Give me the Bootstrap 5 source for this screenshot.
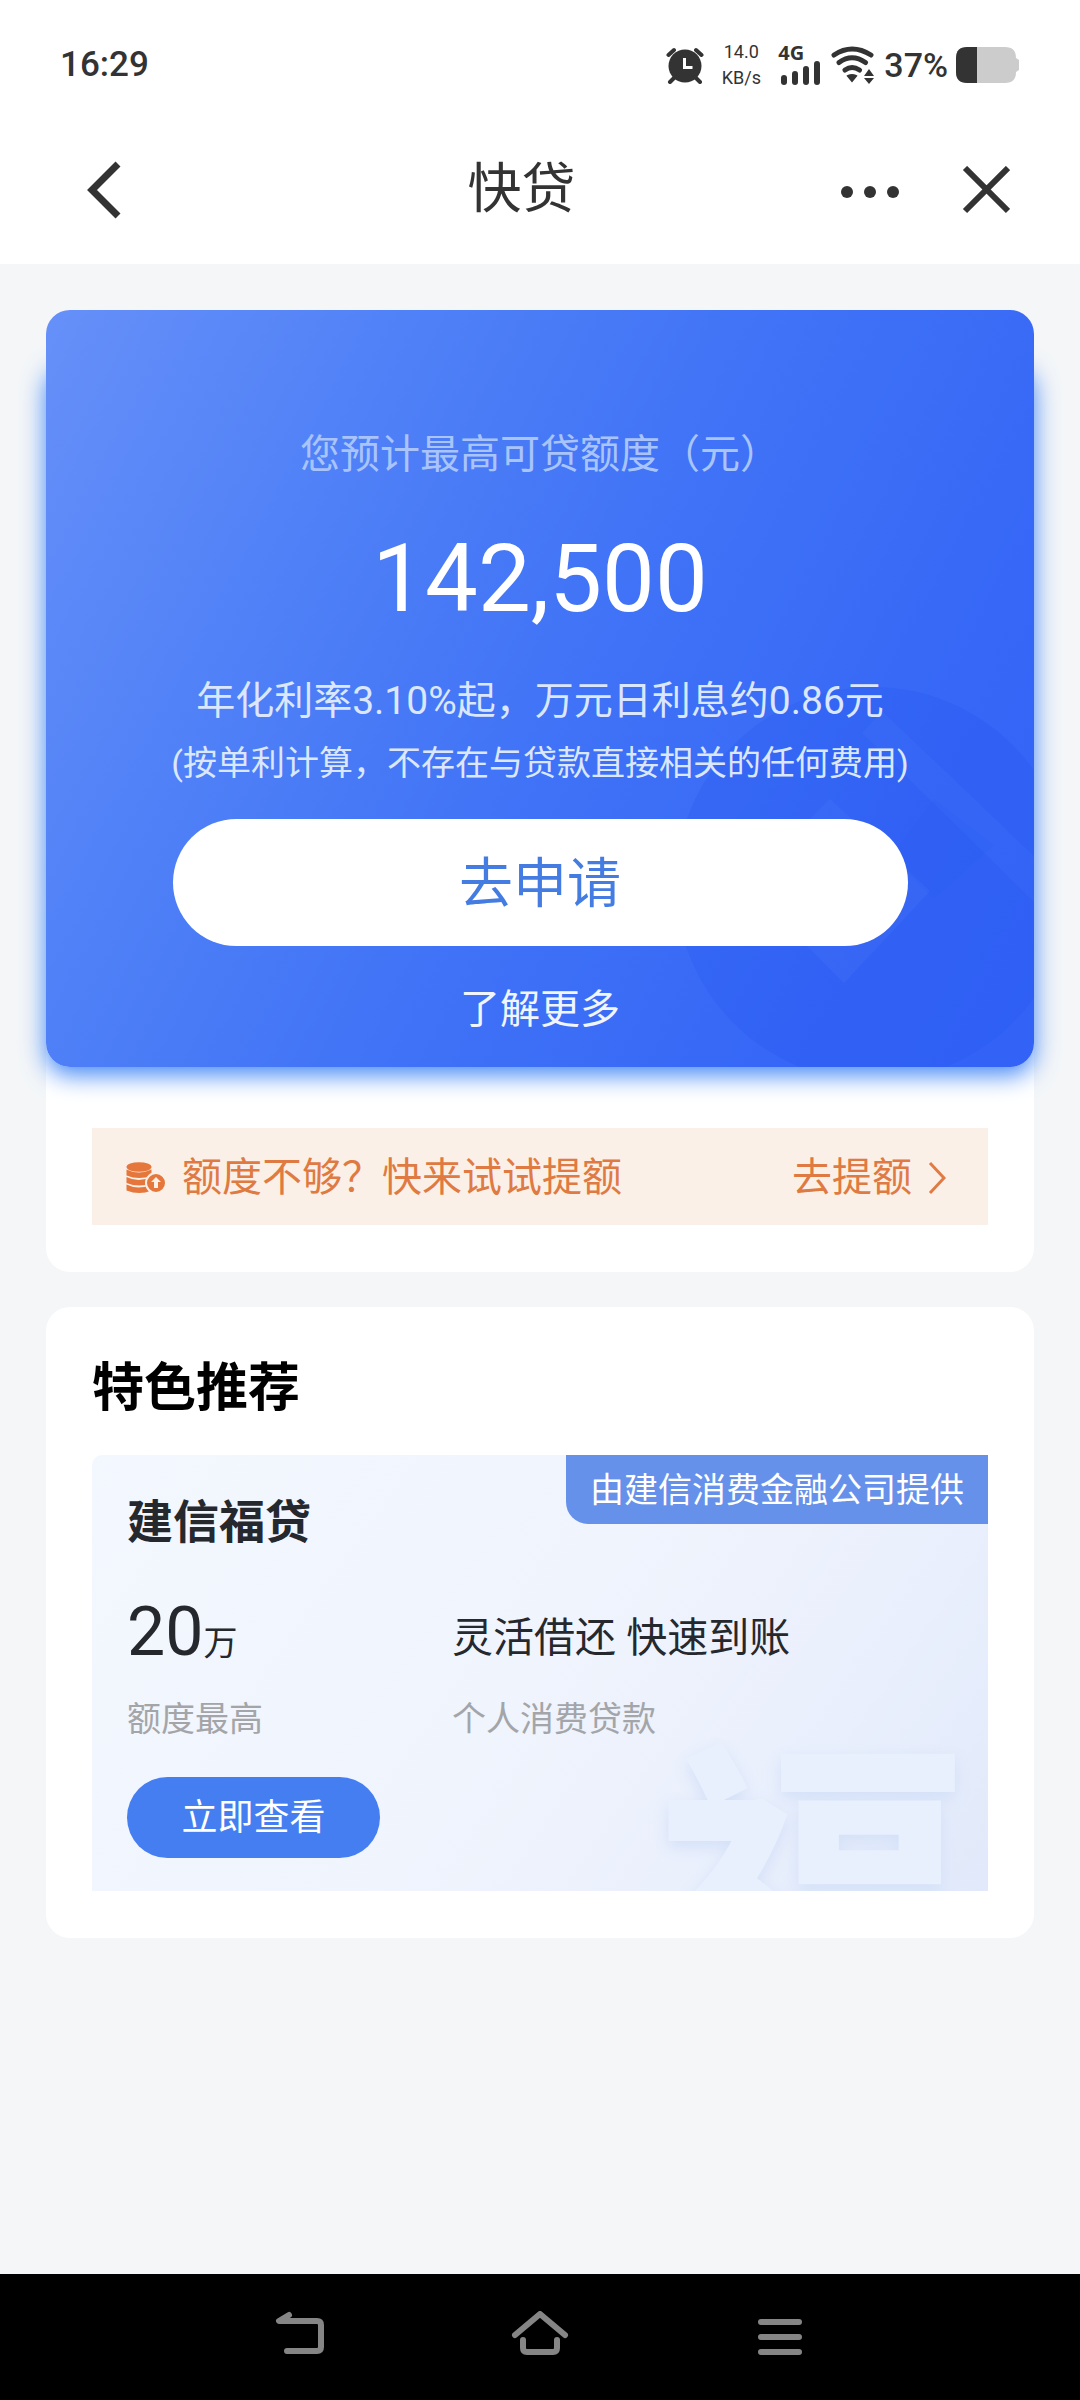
<!DOCTYPE html>
<html lang="zh-CN">
<head>
<meta charset="utf-8">
<meta name="viewport" content="width=device-width, initial-scale=1">
<title>快贷</title>
<link href="https://cdn.jsdelivr.net/npm/bootstrap@5.3.0/dist/css/bootstrap.min.css" rel="stylesheet">
<style>
  body { background: #f4f6f8; color: #25282d; font-family: Roboto, "Noto Sans CJK SC", sans-serif; font-size: 40px; line-height: 60px; }
  svg { display: block; flex-shrink: 0; }
  a { text-decoration: none; color: inherit; }
  .top-area { background: #fff; color: #333; }
  .status-row { height: 130px; padding: 0 60px; }
  .clock { font-size: 35px; font-weight: 500; }
  .net-speed { font-size: 18px; line-height: 26px; width: 38px; margin: 0 18px; }
  .net-type { font: 700 20px/16px "Open Sans", sans-serif; }
  .charge { font-size: 34px; font-weight: 500; }
  .title-row { height: 134px; padding: 0 70px 14px 84px; }
  .icon-btn { border: 0; background: none; padding: 0; color: inherit; }
  .back-btn { width: 119px; }
  .page-title { font-size: 54px; line-height: 60px; font-weight: 400; }
  .page-body { padding: 46px 46px 0; }
  .panel { background: #fff; border-radius: 24px; }
  .loan-card { position: relative; background: linear-gradient(118deg, #6690f9 0%, #4f80f7 28%, #4073f6 52%, #3667f6 80%, #3262f6 100%); border-radius: 24px; padding: 115px 0 27px; color: #dbe7ff; }
  .loan-glow { position: absolute; inset: 50px 0 0; border-radius: 24px; box-shadow: 0 8px 24px 0 #4287f5; }
  .loan-art { position: absolute; right: 0; bottom: 0; border-radius: 0 0 24px 0; }
  .loan-body { position: relative; }
  .quota-label { color: #a9c4fb; }
  .quota-sum { font-size: 94px; line-height: 96px; margin-top: 46px; color: #fff; }
  .rate-line { font-size: 39px; margin-top: 44px; }
  .rate-note { font-size: 34px; line-height: 48px; margin-top: 8px; }
  .apply-btn { width: 735px; max-width: 90%; height: 127px; margin-top: 32px; padding: 10px 0 6px; font-size: 54px; line-height: 60px; }
  .apply-btn, .apply-btn:hover { background: #fff; color: #447ce2; border: 0; }
  .more-link { margin-top: 34px; color: #f0f5ff; }
  .raise-wrap { padding: 61px 46px 47px; }
  .raise-bar { background: #fbf0e8; color: #df7a42; height: 97px; padding: 2px 42px 0 34px; }
  .feature-panel { margin-top: 35px; padding: 52px 46px 47px; }
  .feature-title { font-size: 52px; line-height: 60px; font-weight: 700; color: #000; margin-bottom: 36px; }
  .offer { position: relative; overflow: hidden; border-radius: 10px 0 0 0; padding: 37px 36px 33px 35px; background: linear-gradient(125deg, #f3f7fe 0%, #f0f4fd 50%, #e9effc 78%, #e1e9fa 100%); }
  .offer-body { position: relative; }
  .offer-tag { position: absolute; top: 0; right: 0; background: #6691ea; color: #fff; font-size: 34px; line-height: 68px; padding: 1px 24px 0 24px; border-radius: 0 0 0 22px; }
  .offer-art { position: absolute; right: 18px; top: 284px; font-size: 316px; line-height: 330px; font-weight: 900; color: #e8f0fd; text-shadow: 0 6px 16px #d3e0f8; user-select: none; }
  .offer-name { font-size: 46px; line-height: 60px; font-weight: 700; }
  .offer-grid { margin-top: 44px; }
  .offer-amount { width: 325px; }
  .big-num { font-size: 68px; line-height: 72px; }
  .unit { font-size: 34px; }
  .offer-main { height: 76px; }
  .slogan { font-size: 41px; padding-top: 8px; }
  .hint { font-size: 34px; line-height: 48px; color: #a3a5a8; margin-top: 23px; }
  .view-btn { width: 253px; height: 81px; font-size: 36px; margin-top: 34px; }
  .view-btn, .view-btn:hover { background: #457ef1; color: #fff; border: 0; }
  .sys-nav { background: #000; color: #858585; height: 126px; padding: 0 275px 6px; }
</style>
</head>
<body class="d-flex flex-column min-vh-100">

<header class="top-area">
  <div class="status-row d-flex align-items-center justify-content-between">
    <span class="clock">16:29</span>
    <div class="d-flex align-items-center">
      <svg width="38" height="38" viewBox="0 0 38 38" aria-label="闹钟">
        <circle cx="19" cy="20" r="16.500" fill="#333"/>
        <path d="M2.500 9 8 4M30 4l5.500 5M9 31l-5 5M29 31l5 5" stroke="#333" stroke-width="4" stroke-linecap="round"/>
        <path d="M18.500 12v9.500h8" stroke="#fff" stroke-width="3" fill="none"/>
      </svg>
      <div class="net-speed d-flex flex-column align-items-center"><span>14.0</span><span>KB/s</span></div>
      <div class="d-flex flex-column">
        <span class="net-type">4G</span>
        <svg width="44" height="24" viewBox="0 0 44 24" fill="#333" aria-label="信号">
          <rect x="3" y="14" width="6" height="10" rx="3"/><rect x="14" y="10" width="6" height="14" rx="3"/><rect x="25" y="5" width="6" height="19" rx="3"/><rect x="36" y="0" width="6" height="24" rx="3"/>
        </svg>
      </div>
      <svg class="ms-2" width="46" height="38" viewBox="0 0 46 38" fill="none" stroke="#333" stroke-width="5" stroke-linecap="round" aria-label="无线网络">
        <path d="M4 9Q22-3 41 9M9 16.500Q22 7 35.500 16.500M15 24Q22 19 29.500 24"/>
        <path d="M18 30q4-2 8 0l-4 5z" fill="#333" stroke-width="2"/>
        <path d="m34 30 5-7 5 7zM34 32h10l-5 6z" fill="#333" stroke="none"/>
      </svg>
      <span class="charge ms-2">37%</span>
      <svg class="ms-2" width="64" height="36" viewBox="0 0 64 36" aria-label="电池">
        <path d="M11 0h38q11 0 11 11l3 2v10l-3 2q0 11-11 11H11Q0 36 0 25V11Q0 0 11 0" fill="#ccc"/>
        <path d="M21 0H11Q0 0 0 11v14q0 11 11 11h10z" fill="#333"/>
      </svg>
    </div>
  </div>
  <nav class="title-row d-flex align-items-center" aria-label="页面">
    <button type="button" class="icon-btn back-btn" aria-label="返回">
      <svg width="44" height="60" viewBox="0 0 44 60"><path d="M34 4 8 30l26 26" fill="none" stroke="#333" stroke-width="7"/></svg>
    </button>
    <h1 class="page-title flex-grow-1 text-center mb-0">快贷</h1>
    <div class="d-flex align-items-center">
      <button type="button" class="icon-btn" aria-label="更多">
        <svg width="60" height="48" viewBox="0 0 60 48" fill="#333"><circle cx="7" cy="26" r="6"/><circle cx="30" cy="26" r="6"/><circle cx="53" cy="26" r="6"/></svg>
      </button>
      <button type="button" class="icon-btn" aria-label="关闭">
        <svg width="110" height="48" viewBox="0 0 110 48"><path d="m65 2 43 43M108 2 65 45" fill="none" stroke="#333" stroke-width="6"/></svg>
      </button>
    </div>
  </nav>
</header>

<main class="page-body">
  <section class="panel">
    <div class="position-relative">
      <div class="loan-glow"></div>
      <div class="loan-card text-center">
        <svg class="loan-art" width="380" height="400" viewBox="0 0 380 400" aria-hidden="true">
          <circle cx="219" cy="217" r="197" fill="#1d4cf0" opacity=".17"/>
          <path d="m228 44 152 145v46L208 66z" fill="#5f8bff" opacity=".11"/>
          <path d="m176 132 100 92-86 92-50-50 44-42-52-48z" fill="#5f8bff" opacity=".12"/>
          <path d="m280 132 60 46-60 54-44-42z" fill="#1d4cf0" opacity=".08"/>
        </svg>
        <div class="loan-body d-flex flex-column align-items-center">
          <div class="quota-label">您预计最高可贷额度（元）</div>
          <div class="quota-sum">142,500</div>
          <div class="rate-line">年化利率3.10%起，万元日利息约0.86元</div>
          <div class="rate-note">(按单利计算，不存在与贷款直接相关的任何费用)</div>
          <button type="button" class="btn rounded-pill apply-btn">去申请</button>
          <a href="#" class="more-link">了解更多</a>
        </div>
      </div>
    </div>
    <div class="raise-wrap">
      <a href="#" class="raise-bar d-flex align-items-center justify-content-between">
        <span class="d-flex align-items-center">
          <svg class="me-3" width="40" height="32" viewBox="0 0 40 32" aria-hidden="true">
            <g fill="#e5773c">
              <ellipse cx="13" cy="5" rx="12.500" ry="4.800"/>
              <path d="M.5 7.500q12 6 25 0v6q-12 5-25 0zM.5 15q12 6 25 0v6q-12 5-25 0zM.5 22.500q12 6 25 0v6q-12 5-25 0z"/>
            </g>
            <circle cx="30" cy="21" r="10" fill="#e5773c" stroke="#fbf0e8" stroke-width="2"/>
            <path d="m30 15-5 5h3v6h4v-6h3z" fill="#fbf0e8"/>
          </svg>
          额度不够？快来试试提额
        </span>
        <span class="d-flex align-items-center">
          去提额
          <svg class="ms-3" width="18" height="34" viewBox="0 0 18 34"><path d="m2 2 14 15L2 32" fill="none" stroke="#e07b43" stroke-width="3"/></svg>
        </span>
      </a>
    </div>
  </section>

  <section class="panel feature-panel">
    <h2 class="feature-title">特色推荐</h2>
    <article class="offer">
      <span class="offer-art" aria-hidden="true">福</span>
      <span class="offer-tag">由建信消费金融公司提供</span>
      <div class="offer-body">
        <h3 class="offer-name mb-0">建信福贷</h3>
        <div class="offer-grid d-flex">
          <div class="offer-amount">
            <div class="offer-main d-flex align-items-baseline"><span class="big-num">20</span><span class="unit">万</span></div>
            <div class="hint">额度最高</div>
          </div>
          <div>
            <div class="offer-main slogan d-flex align-items-center">灵活借还 快速到账</div>
            <div class="hint">个人消费贷款</div>
          </div>
        </div>
        <button type="button" class="btn rounded-pill view-btn">立即查看</button>
      </div>
    </article>
  </section>
</main>

<footer class="sys-nav d-flex align-items-center justify-content-between mt-auto">
  <button type="button" class="icon-btn" aria-label="系统返回">
    <svg width="50" height="46" viewBox="0 0 50 46" fill="none" stroke="#858585" stroke-width="6" stroke-linecap="round" stroke-linejoin="round"><path d="M14 4 4 10h38q4 0 4 4v22q0 4-4 4H12"/></svg>
  </button>
  <button type="button" class="icon-btn" aria-label="主屏幕">
    <svg width="58" height="46" viewBox="0 0 58 46" fill="none" stroke="#858585" stroke-width="6" stroke-linecap="round" stroke-linejoin="round"><path d="M4 24 29 3l25 21M12 29v8q0 4 4 4h26q4 0 4-4v-8"/></svg>
  </button>
  <button type="button" class="icon-btn" aria-label="最近任务">
    <svg width="50" height="46" viewBox="0 0 50 46" fill="none" stroke="#858585" stroke-width="6" stroke-linecap="round"><path d="M6 11h38M6 26h38M6 41h38"/></svg>
  </button>
</footer>

<script src="https://cdn.jsdelivr.net/npm/bootstrap@5.3.0/dist/js/bootstrap.bundle.min.js"></script>
</body>
</html>
